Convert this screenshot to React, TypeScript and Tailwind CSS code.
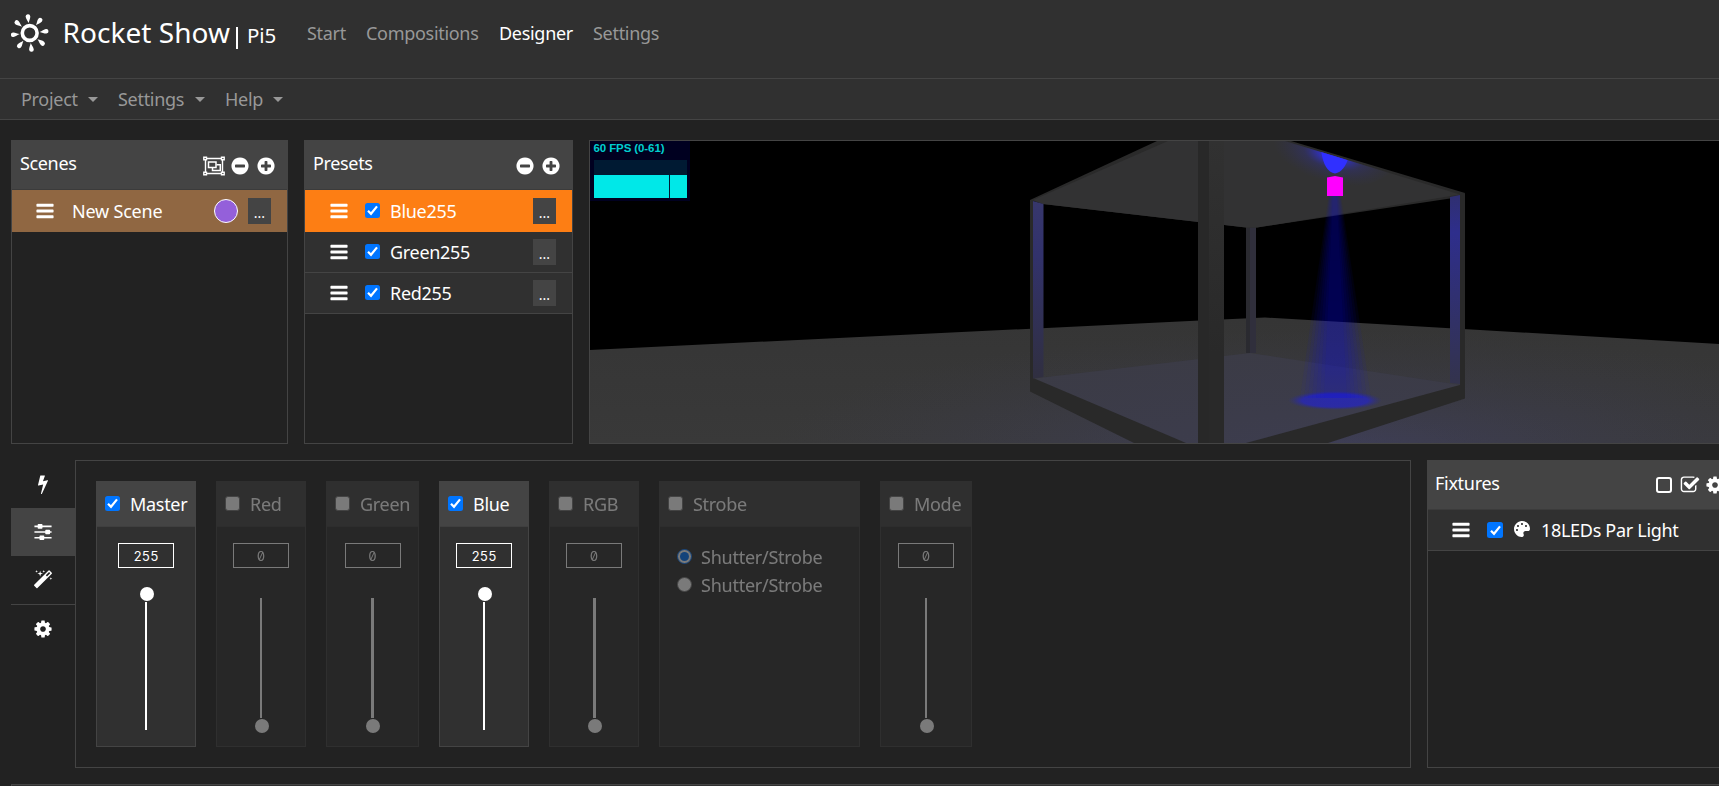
import type { ReactNode } from "react";
import { FaPalette } from "react-icons/fa";

const glyphs = {
  bars: "M1664 1344v128q0 26-19 45t-45 19h-1408q-26 0-45-19t-19-45v-128q0-26 19-45t45-19h1408q26 0 45 19t19 45zm0-512v128q0 26-19 45t-45 19h-1408q-26 0-45-19t-19-45v-128q0-26 19-45t45-19h1408q26 0 45 19t19 45zm0-512v128q0 26-19 45t-45 19h-1408q-26 0-45-19t-19-45v-128q0-26 19-45t45-19h1408q26 0 45 19t19 45z",
  plus: "M1344 960v-128q0-26-19-45t-45-19h-256v-256q0-26-19-45t-45-19h-128q-26 0-45 19t-19 45v256h-256q-26 0-45 19t-19 45v128q0 26 19 45t45 19h256v256q0 26 19 45t45 19h128q26 0 45-19t19-45v-256h256q26 0 45-19t19-45zm320-64q0 209-103 385.5t-279.5 279.5-385.5 103-385.5-103-279.5-279.5-103-385.5 103-385.5 279.5-279.5 385.5-103 385.5 103 279.5 279.5 103 385.5z",
  minus: "M1344 960v-128q0-26-19-45t-45-19h-768q-26 0-45 19t-19 45v128q0 26 19 45t45 19h768q26 0 45-19t19-45zm320-64q0 209-103 385.5t-279.5 279.5-385.5 103-385.5-103-279.5-279.5-103-385.5 103-385.5 279.5-279.5 385.5-103 385.5 103 279.5 279.5 103 385.5z",
  cog: "M1152 896q0-106-75-181t-181-75-181 75-75 181 75 181 181 75 181-75 75-181zm512-109v222q0 12-8 23t-20 13l-185 28q-19 54-39 91 35 50 107 138 10 12 10 25t-9 23q-27 37-99 108t-94 71q-12 0-26-9l-138-108q-44 23-91 38-16 136-29 186-7 28-36 28h-222q-14 0-24.5-8.5t-11.5-21.5l-28-184q-49-16-90-37l-141 107q-10 9-25 9-14 0-25-11-126-114-165-168-7-10-7-23 0-12 8-23 15-21 51-66.5t54-70.5q-27-50-41-99l-183-27q-13-2-21-12.5t-8-23.5v-222q0-12 8-23t19-13l186-28q14-46 39-92-40-57-107-138-10-12-10-24 0-10 9-23 26-36 98.5-107.5t94.5-71.5q13 0 26 10l138 107q44-23 91-38 16-136 29-186 7-28 36-28h222q14 0 24.5 8.5t11.5 21.5l28 184q49 16 90 37l142-107q9-9 24-9 13 0 25 10 129 119 165 170 7 8 7 22 0 12-8 23-15 21-51 66.5t-54 70.5q26 50 41 98l183 28q13 2 21 12.5t8 23.5z",
  bolt: "M1333 566q18 20 7 44l-540 1157q-13 25-42 25-4 0-14-2-17-5-25.5-19t-4.5-30l197-808-406 101q-4 1-12 1-18 0-31-11-18-15-13-39l201-825q4-14 16-23t28-9h328q19 0 32 12.5t13 29.5q0 8-5 18l-171 463 396-98q8-2 12-2 19 0 34 15z",
  magic: "M1254 581l293-293-107-107-293 293zm447-293q0 27-18 45l-1286 1286q-18 18-45 18t-45-18l-198-198q-18-18-18-45t18-45l1286-1286q18-18 45-18t45 18l198 198q18 18 18 45zm-1351-190l98 30-98 30-30 98-30-98-98-30 98-30 30-98zm350 162l196 60-196 60-60 196-60-196-196-60 196-60 60-196zm930 478l98 30-98 30-30 98-30-98-98-30 98-30 30-98zm-640-640l98 30-98 30-30 98-30-98-98-30 98-30 30-98z",
  sliders: "M128 320h512v140H128zM1088 320h576v140h-576zM420 250q0-64 64-64h300q64 0 64 64v280q0 64-64 64h-300q-64 0-64-64zM848 320h300v140h-300zM128 826h1000v140H128zM1472 826h192v140h-192zM1100 756q0-64 64-64h300q64 0 64 64v280q0 64-64 64h-300q-64 0-64-64zM128 1338h500v140H128zM980 1338h684v140h-684zM580 1268q0-64 64-64h300q64 0 64 64v280q0 64-64 64h-300q-64 0-64-64z",
  checkSquare: "M1472 930v318q0 119-84.5 203.5t-203.5 84.5h-832q-119 0-203.5-84.5t-84.5-203.5v-832q0-119 84.5-203.5t203.5-84.5h832q63 0 117 25 15 7 18 23 3 17-9 29l-49 49q-10 10-23 10-3 0-9-2-23-6-45-6h-832q-66 0-113 47t-47 113v832q0 66 47 113t113 47h832q66 0 113-47t47-113v-254q0-13 9-22l64-64q10-10 23-10 6 0 12 3 20 8 20 29zm231-489l-814 814q-24 24-57 24t-57-24l-430-430q-24-24-24-57t24-57l110-110q24-24 57-24t57 24l263 263 647-647q24-24 57-24t57 24l110 110q24 24 24 57t-24 57z",
};

function Glyph({ name, className = "" }: { name: keyof typeof glyphs; className?: string }) {
  return (
    <svg viewBox="0 0 1792 1792" fill="currentColor" className={`size-5 shrink-0 ${className}`}>
      <path d={glyphs[name]} />
    </svg>
  );
}

function ObjectGroup() {
  return (
    <svg viewBox="0 0 22 20" fill="none" stroke="currentColor" className="h-5 w-[22px] shrink-0">
      <path d="M2.500 2.500h17v15h-17z" strokeWidth="1.400" />
      <path d="M5.500 6h7.500v5.500H5.500z" strokeWidth="1.500" />
      <path d="M13.500 8.700h3.800v5.800H9.500V12" strokeWidth="1.500" />
      <path d="M.8 1.200h2.700v2.600H.8zM18.500 1.200h2.700v2.600h-2.700zM.8 16.200h2.700v2.600H.8zM18.500 16.200h2.700v2.600h-2.700z" strokeWidth="1.400" fill="#444" />
    </svg>
  );
}

function Logo() {
  return (
    <svg viewBox="0 0 38 38" className="size-[38px] shrink-0" fill="#fff">
      <circle cx="18.700" cy="19" r="7.400" fill="none" stroke="#fff" strokeWidth="3.600" />
      {[-6, 39, 84, 129, 174, 219, 264, 309].map((a) => (
        <path key={a} transform={`rotate(${a} 18.700 19)`} d="M18.700 9C18 6.600 16.400 4.400 16.400 2.400a2.300 2.300 0 0 1 4.600 0c0 2-1.600 4.200-2.300 6.600z" />
      ))}
    </svg>
  );
}

function Check({ on = true, className = "size-[15px]" }: { on?: boolean; className?: string }) {
  if (!on) return <span className={`shrink-0 rounded-[3px] border border-[#767676] bg-white ${className}`} />;
  return (
    <span className={`flex shrink-0 items-center justify-center rounded-[2.500px] bg-[#0075ff] ${className}`}>
      <svg viewBox="0 0 15 15" className="size-[15px]" fill="none" stroke="#fff" strokeWidth="2.200">
        <path d="M3 7.700l3 3.100 6-7.400" />
      </svg>
    </span>
  );
}

function More() {
  return (
    <span className="flex h-[26px] w-[23px] shrink-0 items-center justify-center bg-[#444] text-[14px] leading-none">
      <span className="mt-[3px]">...</span>
    </span>
  );
}

function PanelHead({ title, children }: { title: string; children: ReactNode }) {
  return (
    <div className="flex h-[49px] shrink-0 items-center justify-between border-b border-[#3b3b3b] bg-[#444] pl-[8px] pr-[11px]">
      <span className="-mt-[3px] tracking-[-0.35px]">{title}</span>
      <div className="mt-[2px] flex items-center gap-[6px]">{children}</div>
    </div>
  );
}

function Menu({ label, className }: { label: string; className: string }) {
  return (
    <div className={`flex items-center justify-between ${className}`}>
      <span>{label}</span>
      <span className="border-x-[5px] border-t-[5px] border-x-transparent border-t-[#989898]" />
    </div>
  );
}

function PresetRow({ name, active = false }: { name: string; active?: boolean }) {
  return (
    <div className={`flex shrink-0 items-center pl-[23.500px] pr-[16px] ${active ? "h-[42px] bg-[#fd7e14]" : "h-[41px] border-b border-[#444] bg-[#303030]"}`}>
      <Glyph name="bars" />
      <Check className="-mt-[2px] ml-[16.500px] size-[15px]" />
      <span className="ml-[10px] grow tracking-[-0.3px]">{name}</span>
      <More />
    </div>
  );
}

function Card({ name, on = false, width, children }: { name: string; on?: boolean; width: string; children: ReactNode }) {
  return (
    <div className={`flex h-[266px] flex-col border border-[#444] bg-[#303030] ${width} ${on ? "" : "opacity-40"}`}>
      <div className="flex h-[45px] shrink-0 items-center border-b border-[#3f3f3f] bg-[#444] pl-[8px]">
        <Check on={on} className="-mt-[1px] size-[15px]" />
        <span className="ml-[10px] tracking-[-0.3px]">{name}</span>
      </div>
      {children}
    </div>
  );
}

function Fader({ value, wide = false, thumb = "ml-[2px]" }: { value: number; wide?: boolean; thumb?: string }) {
  return (
    <div className="flex flex-col items-center">
      <div className="mt-[16px] flex h-[25px] w-[56px] items-center justify-center border border-white pt-[1px] font-[Inter] text-[13px] tracking-[-0.1px] [font-feature-settings:'zero','tnum']">
        {value}
      </div>
      {value > 0 ? (
        <>
          <div className={`mt-[19px] size-[14px] rounded-full bg-white ${thumb}`} />
          <div className="mt-[1px] h-[128px] w-[2px] bg-white" />
        </>
      ) : (
        <>
          <div className={`mt-[30px] h-[120px] bg-white ${wide ? "w-[3px]" : "w-[2px]"}`} />
          <div className={`mt-[1px] size-[14px] rounded-full bg-white ${thumb}`} />
        </>
      )}
    </div>
  );
}

function Stage() {
  return (
    <svg viewBox="590 141 1129 302" className="h-[302px] w-[1129px]">
      <defs>
        <linearGradient id="floor" x1="0" y1="0" x2="0" y2="1">
          <stop offset="0" stopColor="#353535" />
          <stop offset="1" stopColor="#393939" />
        </linearGradient>
        <radialGradient id="spill" gradientUnits="userSpaceOnUse" cx="0" cy="0" r="1" gradientTransform="translate(1330 450) scale(560 120)">
          <stop offset="0" stopColor="#484890" stopOpacity=".35" />
          <stop offset="1" stopColor="#404060" stopOpacity="0" />
        </radialGradient>
        <linearGradient id="postL" x1="0" y1="0" x2="0" y2="1">
          <stop offset="0" stopColor="#37376c" />
          <stop offset=".3" stopColor="#32326c" />
          <stop offset="1" stopColor="#302f40" />
        </linearGradient>
        <linearGradient id="postR" x1="0" y1="0" x2="0" y2="1">
          <stop offset="0" stopColor="#2f2f70" />
          <stop offset=".2" stopColor="#2e2e8c" />
          <stop offset="1" stopColor="#33334c" />
        </linearGradient>
        <linearGradient id="front" x1="0" y1="0" x2="0" y2="1">
          <stop offset="0" stopColor="#313131" />
          <stop offset=".7" stopColor="#292929" />
        </linearGradient>
        <radialGradient id="halo" gradientUnits="userSpaceOnUse" cx="0" cy="0" r="1" gradientTransform="translate(1334 155) rotate(14) scale(62 28)">
          <stop offset="0" stopColor="#3030ff" stopOpacity=".95" />
          <stop offset=".25" stopColor="#3030e0" stopOpacity=".7" />
          <stop offset=".5" stopColor="#303090" stopOpacity=".35" />
          <stop offset="1" stopColor="#303060" stopOpacity="0" />
        </radialGradient>
        <linearGradient id="shaft" x1="0" y1="0" x2="0" y2="1">
          <stop offset="0" stopColor="#fff" stopOpacity=".85" />
          <stop offset=".8" stopColor="#fff" stopOpacity="1" />
          <stop offset="1" stopColor="#fff" stopOpacity=".7" />
        </linearGradient>
        <mask id="fade">
          <path d="M1290 190h90v215h-90z" fill="url(#shaft)" />
        </mask>
        <radialGradient id="pool">
          <stop offset="0" stopColor="#2a2aa8" />
          <stop offset=".7" stopColor="#2a2aa8" stopOpacity=".95" />
          <stop offset="1" stopColor="#2f2f80" stopOpacity="0" />
        </radialGradient>
        <clipPath id="roof">
          <path d="M1033 200L1168 141H1285L1460 194.500L1257 227.500H1246L1043 204z" />
        </clipPath>
      </defs>
      <path d="M590 141h1129v302H590z" fill="#000" />
      <path d="M590 350L1200 320.500L1265 317.500L1480 330L1719 344V443H590z" fill="url(#floor)" />
      <path d="M590 350L1200 320.500L1265 317.500L1480 330L1719 344V443H590z" fill="url(#spill)" />
      <path d="M1034 378.500L1250 353L1460 385L1246 443H1186z" fill="#3b3b45" />
      <path d="M1034 378.500L1250 353L1460 385L1246 443H1186z" fill="url(#spill)" opacity=".4" />
      <path d="M1246 226h10v127h-10z" fill="#302f3c" />
      <path d="M1246 226h4v127h-4z" fill="#2a2a30" />
      <path d="M1030 200L1157 141H1291L1465 193L1460 197L1257 227.500H1246L1043 204z" fill="#2a2a2a" />
      <path d="M1033 200L1168 141H1285L1460 194.500L1257 227.500H1246L1043 204z" fill="#323233" />
      <g clipPath="url(#roof)">
        <ellipse cx="1334" cy="155" rx="66" ry="34" fill="url(#halo)" />
        <path d="M1321 150q3 22 14 23.500q10-2 14-18z" fill="#3030ff" />
      </g>
      <path d="M1030 200h3v178l153 65h-52l-104-51.500z" fill="#292929" />
      <path d="M1033 201l10.500 3v173l-10.500 1.500z" fill="url(#postL)" />
      <path d="M1460 194l5-1v205.500L1328 443h-82l214-58z" fill="#292929" />
      <path d="M1450 197l10-2v189l-10-1z" fill="url(#postR)" />
      <path d="M1198 141h26v302h-26z" fill="url(#front)" />
      <path d="M1198 141h11v302h-11z" fill="#282828" />
      <ellipse cx="1335" cy="400.500" rx="47" ry="9.500" fill="url(#pool)" />
      <g mask="url(#fade)">
        {[0, 1, 2, 3, 4, 5, 6].map((i) => (
          <path key={i} d={`M${1328.5 + i * 0.7} 196H${1341 - i * 0.7}L${1371 - i * 4} 398H${1300 + i * 4}z`} fill="#1010ff" opacity=".058" />
        ))}
      </g>
      <path d="M1327 177.500l8-1.500 8 1.500v18.500h-16z" fill="#f0f" />
    </svg>
  );
}

export default function App() {
  return (
    <div className="flex h-[786px] w-[1719px] flex-col overflow-hidden bg-[#222] font-['Noto_Sans','Open_Sans',sans-serif] text-[18px] leading-[27px] whitespace-nowrap text-white">
      <header className="flex h-[79px] shrink-0 items-start border-b border-[#444] bg-[#303030] pl-[11px] pt-[14px]">
        <Logo />
        <span className="ml-[13.500px] w-[173.500px] text-[28px] leading-[37px] tracking-[0.05px]">Rocket Show</span>
        <span className="mt-[13px] mr-[9px] h-[22px] w-[2px] bg-white" />
        <span className="mt-[1px] w-[60px] text-[20.500px] leading-[40px] tracking-[-0.1px]">Pi5</span>
        <nav className="mt-[6px] flex tracking-[-0.3px] text-[#989898]">
          <a className="w-[59px]">Start</a>
          <a className="w-[133px]">Compositions</a>
          <a className="w-[94px] text-white">Designer</a>
          <a>Settings</a>
        </nav>
      </header>
      <div className="flex h-[41px] shrink-0 items-center gap-[20px] border-b border-[#444] bg-[#303030] pl-[21px] tracking-[-0.3px] text-[#989898]">
        <Menu label="Project" className="w-[77px]" />
        <Menu label="Settings" className="w-[87px]" />
        <Menu label="Help" className="w-[58px]" />
      </div>

      <main className="flex flex-col gap-[16px] pl-[11px] pt-[20px]">
        <div className="flex h-[304px] gap-[16px]">
          <section className="flex w-[277px] shrink-0 flex-col border border-[#444]">
            <PanelHead title="Scenes">
              <ObjectGroup />
              <Glyph name="minus" className="-ml-[1px]" />
              <Glyph name="plus" />
            </PanelHead>
            <div className="flex h-[42px] items-center bg-[#906742] pl-[23px] pr-[16px]">
              <Glyph name="bars" />
              <span className="ml-[17px] grow tracking-[-0.2px]">New Scene</span>
              <span className="mr-[10.500px] size-[24px] rounded-full border border-white bg-[#9460da]" />
              <More />
            </div>
          </section>
          <section className="flex w-[269px] shrink-0 flex-col border border-[#444]">
            <PanelHead title="Presets">
              <Glyph name="minus" />
              <Glyph name="plus" />
            </PanelHead>
            <PresetRow name="Blue255" active />
            <PresetRow name="Green255" />
            <PresetRow name="Red255" />
          </section>
          <section className="relative w-[1140px] shrink-0 overflow-hidden border border-[#444]">
            <Stage />
            <div className="absolute left-0 top-0 flex h-[60px] w-[100px] flex-col bg-[#000020] pl-[3.500px] pt-[1px]">
              <span className="h-[18px] font-['Liberation_Sans'] text-[11.500px] leading-[13px] font-bold tracking-[-0.1px] text-[#00cfcf]">60 FPS (0-61)</span>
              <div className="flex h-[37.500px] w-[93px] items-end gap-[1.500px] bg-[#001a33]">
                <div className="h-[23px] w-[75px] bg-[#00e8e8]" />
                <div className="h-[23px] w-[16.500px] bg-[#00e8e8]" />
              </div>
            </div>
          </section>
        </div>

        <div className="flex h-[308px]">
          <div className="flex w-[64px] shrink-0 flex-col">
            <div className="flex h-[48px] items-center justify-center"><Glyph name="bolt" /></div>
            <div className="flex h-[48px] items-center justify-center bg-[#444]"><Glyph name="sliders" /></div>
            <div className="flex h-[49px] items-center justify-center border-b border-[#444]"><Glyph name="magic" /></div>
            <div className="flex h-[48px] items-center justify-center"><Glyph name="cog" /></div>
          </div>
          <section className="flex w-[1336px] shrink-0 gap-[20px] border border-[#444] pl-[20px] pt-[20px]">
            <Card name="Master" on width="w-[100px]"><Fader value={255} /></Card>
            <Card name="Red" width="w-[90px]"><Fader value={0} /></Card>
            <Card name="Green" width="w-[93px]"><Fader value={0} wide thumb="ml-[1px]" /></Card>
            <Card name="Blue" on width="w-[90px]"><Fader value={255} /></Card>
            <Card name="RGB" width="w-[90px]"><Fader value={0} wide /></Card>
            <Card name="Strobe" width="w-[201px]">
              <div className="flex flex-col gap-[1px] pl-[17px] pt-[17px] tracking-[-0.25px]">
                <div className="flex items-center gap-[9px]">
                  <span className="-mt-[2px] flex size-[15px] items-center justify-center rounded-full border-[1.500px] border-[#0075ff] bg-white">
                    <span className="size-[9px] rounded-full bg-[#0075ff]" />
                  </span>
                  <span>Shutter/Strobe</span>
                </div>
                <div className="flex items-center gap-[9px]">
                  <span className="-mt-[2px] size-[15px] rounded-full border border-[#767676] bg-white" />
                  <span>Shutter/Strobe</span>
                </div>
              </div>
            </Card>
            <Card name="Mode" width="w-[92px]"><Fader value={0} thumb="ml-[1px]" /></Card>
          </section>
          <section className="ml-[16px] flex w-[308px] shrink-0 flex-col border border-[#444]">
            <div className="flex h-[49px] shrink-0 items-center border-b border-[#3b3b3b] bg-[#444] pl-[7px]">
              <span className="-mt-[3px] w-[221px] tracking-[-0.3px]">Fixtures</span>
              <span className="size-[16px] rounded-[3px] border-2 border-white" />
              <Glyph name="checkSquare" className="ml-[8px]" />
              <Glyph name="cog" className="ml-[5px]" />
            </div>
            <div className="flex h-[41px] shrink-0 items-center border-b border-[#444] bg-[#303030] pl-[22.500px]">
              <Glyph name="bars" />
              <Check className="ml-[16.500px] size-[16px]" />
              <FaPalette className="-mt-[3px] ml-[11px] size-[16px]" />
              <span className="ml-[11px] tracking-[-0.3px]">18LEDs Par Light</span>
            </div>
          </section>
        </div>
        <div className="h-[20px] w-[1720px] border border-[#444] bg-[#303030]" />
      </main>
    </div>
  );
}
